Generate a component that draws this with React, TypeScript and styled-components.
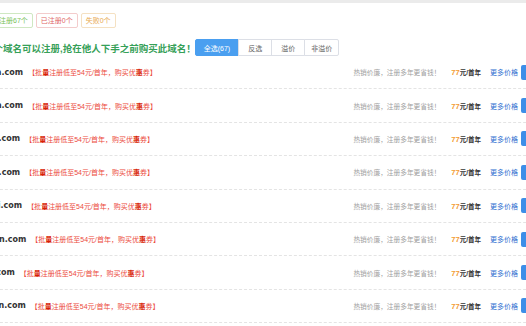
import styled, { createGlobalStyle } from "styled-components";

const GlobalStyle = createGlobalStyle`
  html, body {
    margin: 0;
    padding: 0;
    background: #fff;
    overflow: hidden;
  }
  body {
    font-family: "Liberation Sans", "Noto Sans CJK SC", sans-serif;
  }
`;

const TopBar = styled.div`
  height: 3px;
  background: #ebebeb;
`;

/* the page is scrolled a little to the right, so its left edge is cut */
const Page = styled.div`
  margin-left: -40px;
  width: calc(100% + 75px);
`;

const TagBar = styled.div`
  display: flex;
  gap: 3px;
  margin-top: 10px;
  padding-left: 27px;
`;

const Tag = styled.span<{ $tone: "green" | "red" | "orange" }>`
  height: 15px;
  line-height: 13px;
  box-sizing: border-box;
  padding: 0 4px;
  font-size: 7px;
  border-radius: 2px;
  border: 1px solid
    ${(p) =>
      p.$tone === "green" ? "#cfe8c2" : p.$tone === "red" ? "#f3cccc" : "#f5e1c2"};
  color: ${(p) =>
    p.$tone === "green" ? "#79c25a" : p.$tone === "red" ? "#e06666" : "#e8a94e"};
`;

const HeadRow = styled.div`
  display: flex;
  align-items: center;
  height: 17px;
  margin-top: 11px;
  padding-left: 23px;
`;

const Heading = styled.span`
  font-size: 9.5px;
  font-weight: bold;
  color: #36a058;
`;

const BtnGroup = styled.div`
  display: flex;
  margin-left: 0;
  height: 17px;
`;

const GroupBtn = styled.span<{ $active?: boolean }>`
  display: flex;
  align-items: center;
  padding: 0 9px;
  font-size: 7px;
  box-sizing: border-box;
  border: 1px solid ${(p) => (p.$active ? "#4a9ff0" : "#dcdfe6")};
  margin-left: -1px;
  background: ${(p) => (p.$active ? "#4a9ff0" : "#fff")};
  color: ${(p) => (p.$active ? "#fff" : "#666")};
  &:first-child {
    border-radius: 2px 0 0 2px;
    padding: 0 8px;
  }
  &:last-child {
    border-radius: 0 2px 2px 0;
    padding: 0 6px;
  }
`;

const List = styled.div``;

const Row = styled.div`
  display: flex;
  align-items: center;
  justify-content: space-between;
  height: 33.4px;
  box-sizing: border-box;
  border-bottom: 1px dashed #e4e4e4;
`;

const Left = styled.div`
  display: flex;
  align-items: center;
`;

const Domain = styled.span`
  font-family: "DejaVu Sans", sans-serif;
  font-weight: bold;
  font-size: 8px;
  color: #333;
`;

const Promo = styled.span`
  margin-left: 5px;
  font-size: 7px;
  color: #ec4a3c;
  b {
    color: #d81e06;
  }
`;

const Right = styled.div`
  display: flex;
  align-items: center;
`;

const Slogan = styled.span`
  font-size: 6.7px;
  color: #a0a0a0;
`;

const Price = styled.span`
  margin-left: 11px;
  font-size: 6.5px;
  font-weight: bold;
  color: #333;
  em {
    font-style: normal;
    font-size: 7.5px;
    color: #f39a2f;
  }
`;

const More = styled.span`
  margin-left: 9px;
  font-size: 7px;
  color: #2f6fd0;
`;

const BuyBtn = styled.span`
  margin-left: 3px;
  width: 40px;
  height: 15px;
  border-radius: 2px;
  background: #3d8ee8;
`;

const domains = [
  "huangxia.com",
  "guangxia.com",
  "huayuan.com",
  "yuanhao.com",
  "shengshi.com",
  "dongyuan.com",
  "haoyun.com",
  "kangyuan.com",
];

function App() {
  return (
    <>
      <GlobalStyle />
      <TopBar />
      <Page>
        <TagBar>
          <Tag $tone="green">未注册67个</Tag>
          <Tag $tone="red">已注册0个</Tag>
          <Tag $tone="orange">失败0个</Tag>
        </TagBar>
        <HeadRow>
          <Heading>67个域名可以注册,抢在他人下手之前购买此域名！</Heading>
          <BtnGroup>
            <GroupBtn $active>全选(67)</GroupBtn>
            <GroupBtn>反选</GroupBtn>
            <GroupBtn>溢价</GroupBtn>
            <GroupBtn>非溢价</GroupBtn>
          </BtnGroup>
        </HeadRow>
        <List>
          {domains.map((d) => (
            <Row key={d}>
              <Left>
                <Domain>{d}</Domain>
                <Promo>
                  【批<b>量</b>注册低至54元/首年，购买优<b>惠</b>券】
                </Promo>
              </Left>
              <Right>
                <Slogan>热销价廉，注册多年更省钱！</Slogan>
                <Price>
                  <em>77</em>元/首年
                </Price>
                <More>更多价格</More>
                <BuyBtn />
              </Right>
            </Row>
          ))}
        </List>
      </Page>
    </>
  );
}

export default App;
